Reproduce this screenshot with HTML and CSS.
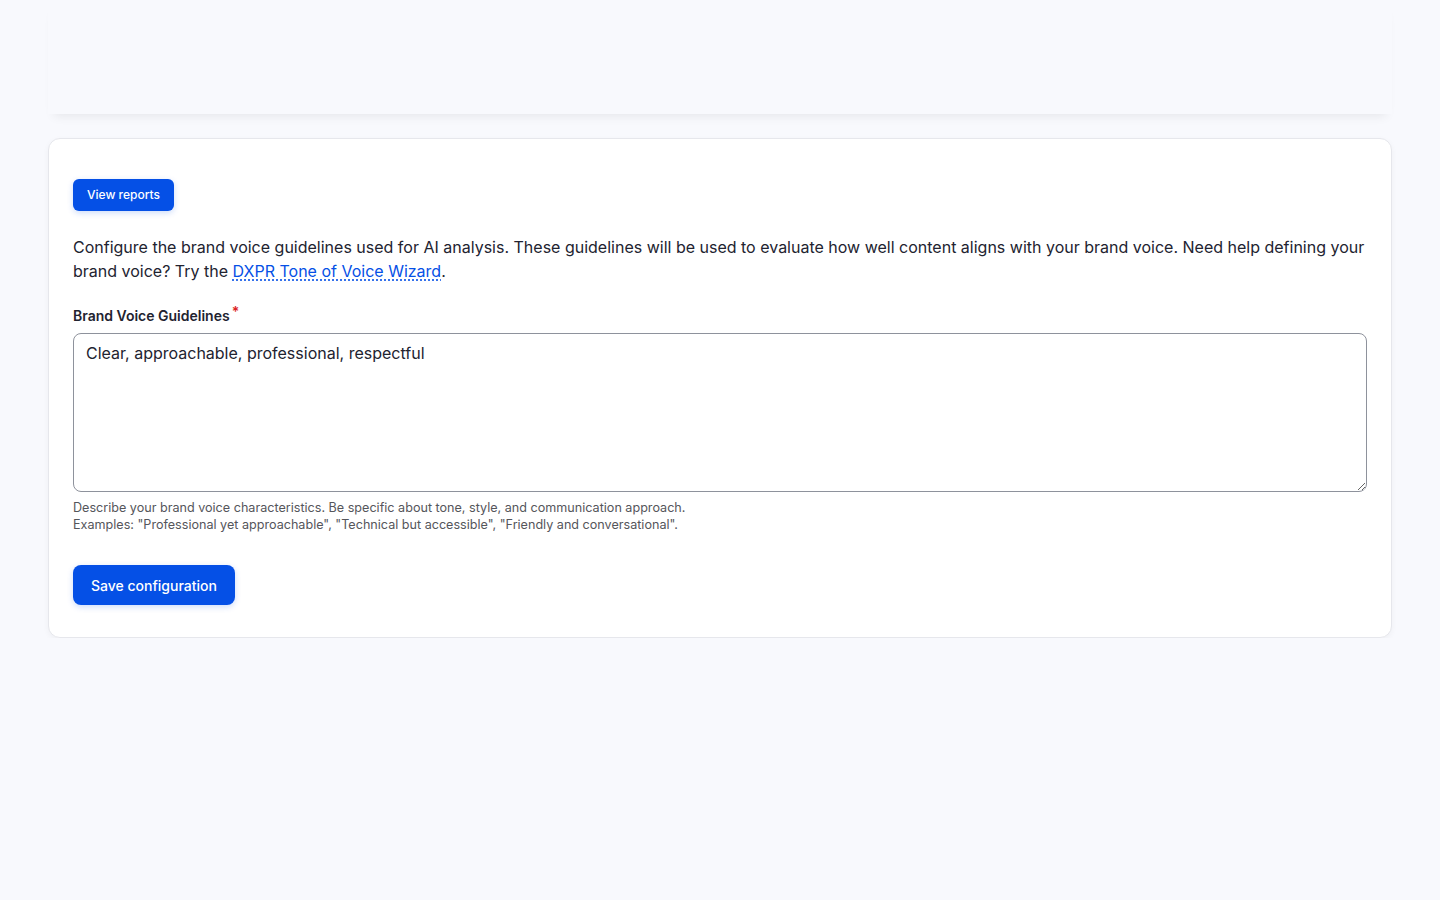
FILE: index.html
```html
<!DOCTYPE html>
<html lang="en">
<head>
    <meta charset="UTF-8">
    <meta name="viewport" content="width=device-width, initial-scale=1.0">
    <title>Brand Voice Settings</title>
    <link rel="stylesheet" href="styles.css">
</head>
<body>
    <div class="page">
        <header class="top-bar"></header>

        <main class="card">
            <a class="btn btn-small" href="#reports">View reports</a>

            <p class="intro">
                Configure the brand voice guidelines used for AI analysis. These guidelines will be used to evaluate how well content aligns with your brand voice. Need help defining your brand voice? Try the <a href="#wizard">DXPR Tone of Voice Wizard</a>.
            </p>

            <form action="#" method="POST">
                <div class="form-item">
                    <label for="brandVoice">Brand Voice Guidelines<span class="required">*</span></label>
                    <textarea id="brandVoice" name="brandVoice" required>Clear, approachable, professional, respectful</textarea>
                    <div class="description">
                        Describe your brand voice characteristics. Be specific about tone, style, and communication approach.<br>
                        Examples: "Professional yet approachable", "Technical but accessible", "Friendly and conversational".
                    </div>
                </div>

                <input type="submit" class="btn btn-primary" value="Save configuration">
            </form>
        </main>
    </div>
</body>
</html>
```

FILE: styles.css
```css
body {
    font-family: Inter, "Noto Sans", Arial, sans-serif;
    margin: 0;
    padding: 0;
    background-color: #f8f9fd; /* Very light blue-gray page */
    color: #222330;
}

.page {
    padding: 0 48px;
}

.top-bar {
    height: 114px;
    background-color: #f8f9fd;
    box-shadow: 0 8px 10px -6px rgba(0, 0, 0, 0.08);
    margin-bottom: 24px;
}

.card {
    background-color: #fff;
    border: 1px solid #e6e7ec;
    border-radius: 12px;
    box-shadow: 0 2px 6px rgba(0, 0, 0, 0.04);
    padding: 40px 24px 32px;
}

.btn {
    display: inline-block;
    background-color: #0550e6; /* Primary blue */
    color: #fff;
    border: none;
    font-family: inherit;
    font-weight: 500;
    text-decoration: none;
    cursor: pointer;
    box-shadow: 0 2px 6px rgba(5, 80, 230, 0.2);
}

.btn-small {
    font-size: 12px;
    line-height: 32px;
    height: 32px;
    padding: 0 14px;
    border-radius: 6px;
}

.btn-primary {
    font-size: 14px;
    height: 40px;
    padding: 0 18px;
    border-radius: 8px;
}

.btn:hover {
    background-color: #0443c4;
}

.intro {
    font-size: 16px;
    line-height: 24px;
    margin: 24px 0 23px;
}

.intro a {
    color: #0550e6;
    text-decoration: underline dotted;
    text-underline-offset: 3px;
}

.form-item {
    margin-bottom: 32px;
}

label {
    display: block;
    font-size: 14px;
    font-weight: 600;
    line-height: 20px;
    margin-bottom: 7px;
}

.required {
    color: #dc2323;
    margin-left: 2px;
    position: relative;
    top: -4px;
}

textarea {
    display: block;
    width: 100%;
    height: 159px;
    box-sizing: border-box;
    padding: 7px 12px;
    border: 1px solid #8e929c;
    border-radius: 8px;
    font-family: inherit;
    font-size: 16px;
    line-height: 24px;
    color: #222330;
    resize: vertical;
}

.description {
    font-size: 12.6px;
    line-height: 17px;
    color: #55565b;
    margin-top: 7px;
}
```
